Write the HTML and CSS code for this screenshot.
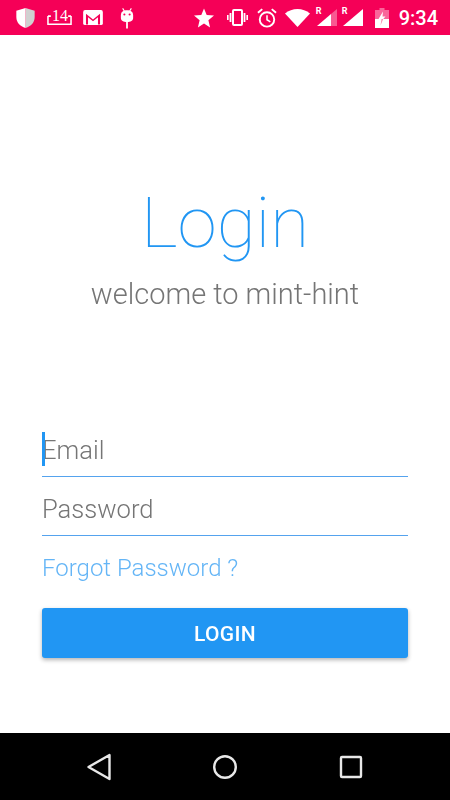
FILE: index.html
```html
<!DOCTYPE html>
<html lang="en">

<head>
    <meta charset="UTF-8">
    <meta name="viewport" content="width=device-width, initial-scale=1.0">
    <title>Login</title>
    <link rel="stylesheet" href="styles.css">
</head>

<body>
    <div class="screen">
        <div class="status-bar">
            <div class="status-left">
                <svg width="21" height="22" viewBox="0 0 22 24">
                    <path d="M11 1 L21 4 V11 C21 17 17 21 11 23 Z" fill="#d0d0d0"/>
                    <path d="M11 1 L1 4 V11 C1 17 5 21 11 23 Z" fill="#fff"/>
                </svg>
                <div class="icon-count">
                    <span class="count-text">14</span>
                    <svg width="25" height="14" viewBox="0 0 26 14">
                        <path d="M1 4 V12.5 H25 V4 M1 4 H4 M22 4 H25" fill="none" stroke="#fff" stroke-width="1.6"/>
                    </svg>
                </div>
                <svg width="20" height="15" viewBox="0 0 21 16">
                    <rect width="21" height="16" rx="2" fill="#fff"/>
                    <path d="M3 15.5 V4 L10.5 10 L18 4 V15.5 H15.8 V7.6 L10.5 12 L5.2 7.6 V15.5 Z" fill="#f50057"/>
                </svg>
                <svg class="icon-droid" width="14" height="22" viewBox="0 0 16 24">
                    <path d="M3 1 L5 4 M13 1 L11 4" stroke="#fff" stroke-width="1.3"/>
                    <path d="M1 9 C1 4.5 4 3 8 3 C12 3 15 4.5 15 9 V12 C15 15 12 16.5 8 16.5 C4 16.5 1 15 1 12 Z" fill="#fff"/>
                    <circle cx="5" cy="8" r="1.2" fill="#f50057"/>
                    <circle cx="11" cy="8" r="1.2" fill="#f50057"/>
                    <rect x="7" y="16" width="2" height="8" fill="#fff"/>
                </svg>
            </div>
            <div class="status-right">
                <svg width="20" height="20" viewBox="0 0 20 20">
                    <path d="M10 0.5 L12.7 7 L20 7.6 L14.4 12.3 L16.1 19.5 L10 15.6 L3.9 19.5 L5.6 12.3 L0 7.6 L7.3 7 Z" fill="#fff"/>
                </svg>
                <svg class="icon-vibrate" width="21" height="17" viewBox="0 0 21 17">
                    <rect x="6" y="1" width="9" height="15" rx="1" fill="none" stroke="#fff" stroke-width="2"/>
                    <path d="M2.6 4 H4.4 V13 H2.6 Z M16.6 4 H18.4 V13 H16.6 Z M0 6 H1.6 V11 H0 Z M19.4 6 H21 V11 H19.4 Z" fill="#fff"/>
                </svg>
                <svg class="icon-alarm" width="20" height="20" viewBox="0 0 21 21">
                    <circle cx="10.5" cy="12" r="7.6" fill="none" stroke="#fff" stroke-width="2"/>
                    <path d="M10.5 7.5 V12.3 L14 14.5" fill="none" stroke="#fff" stroke-width="1.6"/>
                    <path d="M1 5 L5.5 1.2 M20 5 L15.5 1.2" stroke="#fff" stroke-width="2"/>
                </svg>
                <svg class="icon-wifi" width="25" height="18" viewBox="0 0 25 18">
                    <path d="M0 4.5 C7 -1.5 18 -1.5 25 4.5 L12.5 18 Z" fill="#fff"/>
                </svg>
                <div class="signal signal-first">
                    <span class="roam">R</span>
                    <svg width="20" height="17" viewBox="0 0 20 17">
                        <path d="M14 5 L20 0 V17 H14 Z" fill="#fff" fill-opacity="0.35"/>
                        <path d="M0 17 L14 5 V17 Z" fill="#fff"/>
                    </svg>
                </div>
                <div class="signal signal-second">
                    <span class="roam">R</span>
                    <svg width="20" height="17" viewBox="0 0 20 17">
                        <path d="M0 17 L20 0 V17 Z" fill="#fff"/>
                    </svg>
                </div>
                <svg class="icon-battery" width="14" height="20" viewBox="0 0 14 20">
                    <path d="M4.5 0 H9.5 V2 H14 V11 H0 V2 H4.5 Z" fill="#fff" fill-opacity="0.4"/>
                    <path d="M0 11 H14 V20 H0 Z" fill="#fff"/>
                    <path d="M8 3.5 L3.5 11 H8.2 L10.5 8.5 H7.5 Z" fill="#fff"/>
                    <path d="M3.5 11 H6.5 L5.5 17.5 L8.2 11 Z" fill="#f50057" fill-opacity="0.45"/>
                </svg>
                <span class="clock">9:34</span>
            </div>
        </div>

        <div class="content">
            <h1 class="title">Login</h1>
            <p class="subtitle">welcome to mint-hint</p>

            <div class="login-form">
                <div class="field field-focus">
                    <span class="cursor"></span>
                    <input type="text" placeholder="Email">
                </div>
                <div class="field">
                    <input type="password" placeholder="Password">
                </div>
                <a class="forgot" href="#">Forgot Password ?</a>
                <button class="btn-login">LOGIN</button>
            </div>
        </div>

        <div class="nav-bar">
            <svg class="nav-back" width="26" height="28" viewBox="0 0 26 28">
                <path d="M23.5 2 V26 L2.5 14 Z" fill="none" stroke="#e8e8e8" stroke-width="2.4" stroke-linejoin="round"/>
            </svg>
            <svg class="nav-home" width="26" height="26" viewBox="0 0 26 26">
                <circle cx="13" cy="13" r="10.8" fill="none" stroke="#e8e8e8" stroke-width="2.4"/>
            </svg>
            <svg width="24" height="24" viewBox="0 0 24 24">
                <rect x="2" y="2" width="20" height="20" rx="1" fill="none" stroke="#e8e8e8" stroke-width="2.4"/>
            </svg>
        </div>
    </div>
</body>

</html>
```

FILE: styles.css
```css
* {
    box-sizing: border-box;
}

body {
    margin: 0;
    font-family: 'Roboto', sans-serif;
    background-color: #fff;
}

.screen {
    width: 450px;
    height: 800px;
    display: flex;
    flex-direction: column;
    overflow: hidden;
}

/* status bar */
.status-bar {
    height: 35px;
    flex: none;
    background-color: #f50057;
    display: flex;
    justify-content: space-between;
    align-items: center;
    padding: 0 12px 0 15px;
    color: #fff;
}

.status-left {
    display: flex;
    align-items: center;
    gap: 11px;
}

.icon-droid {
    margin-left: 6px;
}

.status-right {
    display: flex;
    align-items: center;
}

.icon-vibrate {
    margin-left: 13px;
}

.icon-alarm {
    margin-left: 9px;
}

.icon-wifi {
    margin-left: 8px;
}

.icon-count {
    position: relative;
    width: 25px;
    height: 16px;
}

.icon-count svg {
    display: block;
    margin-top: 2px;
}

.count-text {
    position: absolute;
    top: -2px;
    left: 5px;
    font-family: 'Liberation Serif', serif;
    font-size: 16px;
    line-height: 16px;
}

.signal {
    position: relative;
    width: 20px;
    height: 17px;
}

.signal-first {
    margin-left: 7px;
}

.signal-second {
    margin-left: 6px;
}

.signal svg {
    display: block;
}

.roam {
    position: absolute;
    top: -3px;
    left: -1px;
    font-size: 9px;
    font-weight: 700;
    line-height: 11px;
}

.icon-battery {
    margin-left: 12px;
}

.clock {
    font-size: 20px;
    font-weight: 500;
    margin-left: 10px;
}

/* main */
.content {
    flex: 1;
    padding: 0 42px;
    display: flex;
    flex-direction: column;
    will-change: transform;
}

.title {
    margin: 146px 0 0;
    text-align: center;
    font-size: 71px;
    font-weight: 100;
    line-height: 84px;
    color: #2196f3;
}

.subtitle {
    margin: 13px 0 0;
    text-align: center;
    font-size: 29px;
    font-weight: 300;
    line-height: 33px;
    color: #757575;
}

.login-form {
    margin-top: 107px;
    display: flex;
    flex-direction: column;
}

.field {
    position: relative;
    height: 59px;
    padding-top: 6px;
    display: flex;
    align-items: center;
    border-bottom: 1px solid #55a3ee;
}

.field input {
    width: 100%;
    border: none;
    outline: none;
    padding: 0;
    background: transparent;
    font-family: 'Roboto', sans-serif;
    font-size: 25.6px;
    font-weight: 300;
    color: #757575;
}

.field input::placeholder {
    color: #757575;
    opacity: 1;
}

.cursor {
    position: absolute;
    left: 0;
    top: 14px;
    width: 3px;
    height: 34px;
    background-color: #2196f3;
}

.forgot {
    margin-top: 18px;
    font-size: 24px;
    font-weight: 300;
    line-height: 29px;
    color: #64b5f6;
    text-decoration: none;
}

.btn-login {
    margin-top: 25px;
    width: 100%;
    height: 50px;
    padding: 2px 0 0;
    border: none;
    border-radius: 3px;
    background-color: #2196f3;
    color: #fff;
    font-family: 'Roboto', sans-serif;
    font-size: 21px;
    font-weight: 500;
    letter-spacing: 0.3px;
    box-shadow: 0 2px 4px rgba(0, 0, 0, 0.3);
    cursor: pointer;
}

/* nav bar */
.nav-bar {
    height: 67px;
    flex: none;
    background-color: #000;
    display: flex;
    justify-content: space-around;
    align-items: center;
    padding: 0 37px;
}

.nav-back,
.nav-home {
    position: relative;
    left: -1px;
}
```
